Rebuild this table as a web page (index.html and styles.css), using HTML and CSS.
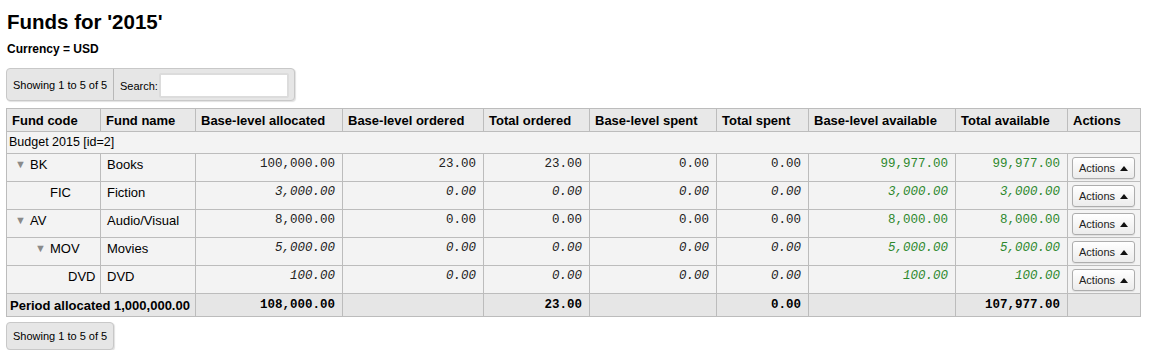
FILE: index.html
```html
<!DOCTYPE html>
<html>
<head>
<meta charset="utf-8">
<link rel="stylesheet" href="styles.css">
</head>
<body>
<h1 class="title">Funds for '2015'</h1>
<p class="currency">Currency = USD</p>
<div class="toolbar">
  <div class="info">Showing 1 to 5 of 5</div>
  <label class="search">Search:<input type="text" class="search-input"></label>
</div>
<table class="funds">
  <colgroup>
    <col style="width:94px"><col style="width:95px"><col style="width:147px"><col style="width:141px"><col style="width:106px"><col style="width:127px"><col style="width:92px"><col style="width:147px"><col style="width:112px"><col style="width:73px">
  </colgroup>
  <thead>
    <tr>
      <th>Fund code</th><th>Fund name</th><th>Base-level allocated</th><th>Base-level ordered</th><th>Total ordered</th><th>Base-level spent</th><th>Total spent</th><th>Base-level available</th><th>Total available</th><th>Actions</th>
    </tr>
  </thead>
  <tbody>
    <tr class="budget"><td colspan="10">Budget 2015 [id=2]</td></tr>
    <tr>
      <td class="code lvl0"><span class="tog">▼</span>BK</td><td>Books</td>
      <td class="num">100,000.00</td><td class="num">23.00</td><td class="num">23.00</td><td class="num">0.00</td><td class="num">0.00</td>
      <td class="num avail">99,977.00</td><td class="num avail">99,977.00</td>
      <td class="act"><button class="btn">Actions <span class="caret"></span></button></td>
    </tr>
    <tr class="child">
      <td class="code lvl1">FIC</td><td>Fiction</td>
      <td class="num">3,000.00</td><td class="num">0.00</td><td class="num">0.00</td><td class="num">0.00</td><td class="num">0.00</td>
      <td class="num avail">3,000.00</td><td class="num avail">3,000.00</td>
      <td class="act"><button class="btn">Actions <span class="caret"></span></button></td>
    </tr>
    <tr>
      <td class="code lvl0"><span class="tog">▼</span>AV</td><td>Audio/Visual</td>
      <td class="num">8,000.00</td><td class="num">0.00</td><td class="num">0.00</td><td class="num">0.00</td><td class="num">0.00</td>
      <td class="num avail">8,000.00</td><td class="num avail">8,000.00</td>
      <td class="act"><button class="btn">Actions <span class="caret"></span></button></td>
    </tr>
    <tr class="child">
      <td class="code lvl1t"><span class="tog">▼</span>MOV</td><td>Movies</td>
      <td class="num">5,000.00</td><td class="num">0.00</td><td class="num">0.00</td><td class="num">0.00</td><td class="num">0.00</td>
      <td class="num avail">5,000.00</td><td class="num avail">5,000.00</td>
      <td class="act"><button class="btn">Actions <span class="caret"></span></button></td>
    </tr>
    <tr class="child">
      <td class="code lvl2">DVD</td><td>DVD</td>
      <td class="num">100.00</td><td class="num">0.00</td><td class="num">0.00</td><td class="num">0.00</td><td class="num">0.00</td>
      <td class="num avail">100.00</td><td class="num avail">100.00</td>
      <td class="act"><button class="btn">Actions <span class="caret"></span></button></td>
    </tr>
  </tbody>
  <tfoot>
    <tr>
      <td colspan="2" class="period">Period allocated 1,000,000.00</td>
      <td class="num">108,000.00</td><td></td><td class="num">23.00</td><td></td><td class="num">0.00</td><td></td><td class="num">107,977.00</td><td></td>
    </tr>
  </tfoot>
</table>
<div class="toolbar bottom">
  <div class="info">Showing 1 to 5 of 5</div>
</div>
</body>
</html>
```

FILE: styles.css
```css
body {
  margin: 0;
  padding: 0 9px 0 6px;
  font-family: "Liberation Sans", Arial, sans-serif;
  color: #000;
  background: #fff;
}
.title {
  font-size: 20.5px;
  font-weight: bold;
  margin: 9px 0 0 1px;
  line-height: 26px;
}
.currency {
  font-size: 12px;
  font-weight: bold;
  margin: 6px 0 0 1px;
  line-height: 16px;
}
.toolbar {
  display: flex;
  align-items: stretch;
  width: 287px;
  height: 31px;
  margin-top: 11px;
  background: #e6e6e6;
  border: 1px solid #c8c8c8;
  border-radius: 4px;
  box-shadow: 1px 1px 1px rgba(0,0,0,0.12);
  font-size: 11px;
}
.toolbar .info {
  display: flex;
  align-items: center;
  padding: 0 6px 0 6px;
  border-right: 1px solid #b8b8b8;
  width: 107px;
  box-sizing: border-box;
  white-space: nowrap;
}
.search {
  display: flex;
  align-items: center;
  padding-left: 6px;
  padding-top: 2px;
}
.search-input {
  width: 130px;
  margin: 0 0 0 1px;
  padding: 0;
  border: 2px solid #dcdcdc;
  border-radius: 2px;
  background: #fff;
  box-sizing: border-box;
  height: 25px;
}
.funds {
  margin-top: 7px;
  border-collapse: collapse;
  table-layout: fixed;
  width: 1134px;
  font-size: 13px;
}
.funds th, .funds td {
  border: 1px solid #bcbcbc;
  padding: 3px 6px 4px;
  line-height: 15px;
  vertical-align: top;
  text-align: left;
  white-space: nowrap;
}
.funds th {
  background: #e8e8e8;
  font-weight: bold;
  padding: 4px 5px 3px;
}
.funds tbody td {
  background: #f3f3f3;
  height: 21px;
  padding-top: 3px;
  padding-bottom: 3px;
}
.funds tbody tr.budget td {
  height: auto;
  padding: 3px 2px 3px;
  font-size: 12.5px;
}
.num {
  font-family: "Liberation Mono", "Courier New", monospace;
  font-size: 12.5px;
  text-align: right !important;
  color: #222;
}
.funds td.num { padding-right: 7px; }
.child .num { font-style: italic; }
.funds td.avail { color: #2d882d; }
.code { font-size: 13px; }
.tog {
  display: inline-block;
  color: #8a8a8a;
  font-size: 11px;
  width: 15px;
  vertical-align: 1px;
}
.funds td.lvl0 { padding-left: 8px; }
.funds td.lvl1 { padding-left: 43px; }
.funds td.lvl1t { padding-left: 28px; }
.funds td.lvl2 { padding-left: 61px; }
.funds td.act {
  padding: 3px 5px 2px 4px;
}
.btn {
  display: inline-flex;
  align-items: center;
  gap: 5px;
  height: 22px;
  padding: 0 6px 0 6px;
  border: 1px solid #adadad;
  border-radius: 3px;
  background: linear-gradient(#ffffff, #ececec);
  font-family: "Liberation Sans", Arial, sans-serif;
  font-size: 11px;
  color: #222;
  box-shadow: 0 1px 1px rgba(0,0,0,0.08);
}
.caret {
  width: 0;
  height: 0;
  border-left: 4px solid transparent;
  border-right: 4px solid transparent;
  border-bottom: 5px solid #111;
}
.funds tfoot td {
  background: #e6e6e6;
  font-weight: bold;
  padding: 4px 6px 3px;
}
.funds tfoot td.num { padding-right: 7px; color: #000; }
.funds tfoot td.period { padding-left: 3px; }
.toolbar.bottom {
  width: 106px;
  height: 26px;
  margin-top: 5px;
}
.toolbar.bottom .info {
  border-right: none;
  width: auto;
}
```
